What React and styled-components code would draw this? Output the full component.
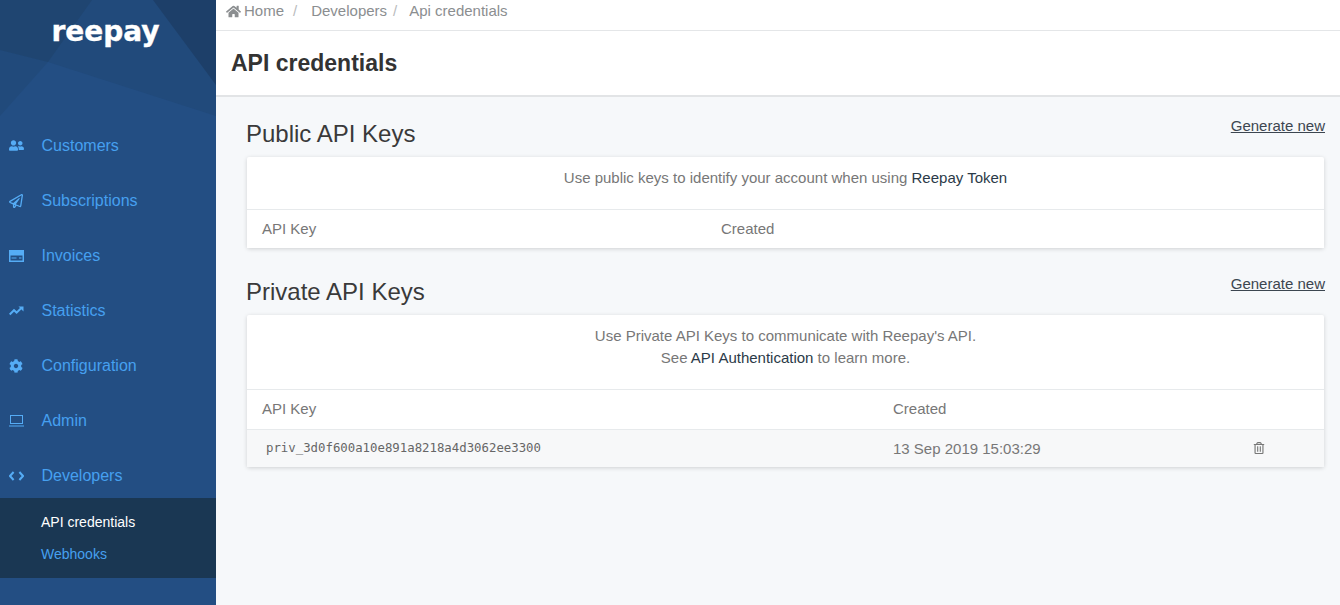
import React from "react";
import styled, { createGlobalStyle } from "styled-components";
import { FaHome, FaRegPaperPlane, FaCog, FaUserFriends, FaRegTrashAlt } from "react-icons/fa";

const GlobalStyle = createGlobalStyle`
  html, body { margin: 0; padding: 0; height: 100%; }
  body { font-family: "Liberation Sans", Arial, sans-serif; background: #f6f8fa; color: #777; overflow: hidden; }
`;

const Page = styled.div`
  display: flex;
  height: 605px;
  width: 1340px;
  overflow: hidden;
`;

const Sidebar = styled.aside`
  width: 216px;
  flex: none;
  background: #234e83;
  display: flex;
  flex-direction: column;
`;

const Brand = styled.div`
  position: relative;
  height: 118px;
  display: flex;
  justify-content: center;
  overflow: hidden;
`;

const BrandArt = styled.svg`
  position: absolute;
  inset: 0;
`;

const Logo = styled.span`
  position: relative;
  margin: 14px 5px 0 0;
  height: 36px;
  line-height: 36px;
  font-family: "DejaVu Sans", sans-serif;
  font-size: 28px;
  font-weight: 700;
  color: #fff;
  -webkit-text-stroke: 0.4px #fff;
`;

const NavList = styled.nav`
  display: flex;
  flex-direction: column;
`;

const NavItem = styled.a`
  height: 55px;
  display: flex;
  align-items: center;
  padding-left: 8px;
  font-size: 16px;
  color: #46a0f0;
`;

const NavIcon = styled.span`
  width: 16px;
  margin-right: 17.5px;
  display: flex;
  justify-content: center;
  color: #55acf5;
`;

const SubNav = styled.div`
  height: 80px;
  margin-top: -5px;
  background: #1a3753;
  display: flex;
  flex-direction: column;
  padding: 8px 0 0 41px;
  box-sizing: border-box;
`;

const SubItem = styled.a`
  height: 32px;
  line-height: 32px;
  font-size: 14px;
  color: ${(p) => (p.$active ? "#ffffff" : "#46a0f0")};
`;

const Main = styled.main`
  flex: 1;
  display: flex;
  flex-direction: column;
  min-width: 0;
`;

const Breadcrumb = styled.div`
  height: 29px;
  background: #fff;
  border-bottom: 1px solid #e4e6e8;
  display: flex;
  align-items: flex-start;
  padding: 1px 0 0 10px;
  font-size: 15px;
  line-height: 20px;
  color: #8b8e90;
`;

const Crumb = styled.span`
  display: flex;
  align-items: center;
  gap: 3px;
`;

const Slash = styled.span`
  color: #b9bbbd;
  margin: 0 ${(p) => p.$right}px 0 ${(p) => p.$left}px;
`;

const TitleBar = styled.header`
  height: 64px;
  background: #fff;
  border-bottom: 2px solid #e2e4e6;
  display: flex;
  align-items: center;
  padding-left: 15px;
`;

const Title = styled.h1`
  margin: 0;
  font-size: 23px;
  font-weight: 700;
  color: #333;
`;

const Content = styled.div`
  flex: 1;
  padding: 20px 15px 0 30px;
`;

const Section = styled.section`
  margin-bottom: 27px;
`;

const SectionHead = styled.div`
  display: flex;
  justify-content: space-between;
  height: 40px;
`;

const SectionTitle = styled.h2`
  margin: 0;
  font-size: 24px;
  font-weight: 400;
  line-height: 34px;
  color: #3a3a3a;
`;

const GenerateLink = styled.a`
  margin-top: -1px;
  font-size: 15px;
  line-height: 20px;
  height: 20px;
  color: #3c4650;
  text-decoration: underline;
`;

const Card = styled.div`
  margin-left: 1px;
  margin-right: 1px;
  background: #fff;
  border-radius: 2px;
  box-shadow: 0 1px 4px rgba(0, 0, 0, 0.16);
`;

const Note = styled.p`
  margin: 0;
  height: ${(p) => p.$height}px;
  padding-top: ${(p) => p.$top}px;
  box-sizing: border-box;
  text-align: center;
  font-size: 15px;
  line-height: 22px;
  color: #777;
  border-bottom: 1px solid #e7eaec;
`;

const Strong = styled.span`
  color: #2b3a48;
`;

const Row = styled.div`
  display: grid;
  grid-template-columns: ${(p) => p.$cols};
  align-items: center;
  box-sizing: border-box;
  height: ${(p) => p.$height}px;
  padding: 0 0 ${(p) => p.$pad}px 15px;
  font-size: 15px;
  color: #777;
  background: ${(p) => (p.$muted ? "#f7f8f9" : "#fff")};
  border-top: ${(p) => (p.$muted ? "1px solid #e7eaec" : "none")};
`;

const Mono = styled.span`
  font-family: "DejaVu Sans Mono", "Liberation Mono", monospace;
  font-size: 12.35px;
  padding-left: 4px;
  color: #666;
`;

const TrashCell = styled.span`
  display: flex;
  color: #777;
`;

const CardIcon = () => (
  <svg width="15" height="12" viewBox="0 0 15 12" fill="currentColor">
    <path d="M0 0h15v12H0z M1.5 5.5v5h12v-5z" fillRule="evenodd" />
    <path d="M2.5 7.5h5v1h-5z M10 7.5h2.5v1H10z" />
  </svg>
);

const TrendIcon = () => (
  <svg width="15" height="10" viewBox="0 0 15 10" fill="none" stroke="currentColor">
    <path d="M0.7 8.5 L5 4.2 L7.6 6.6 L12.6 1.8" strokeWidth="2" />
    <path d="M9.5 0.5 H14.5 V5.5 Z" fill="currentColor" stroke="none" />
  </svg>
);

const LaptopIcon = () => (
  <svg width="15" height="12" viewBox="0 0 15 12" fill="none" stroke="currentColor" strokeWidth="1">
    <rect x="1.5" y="0.5" width="12" height="8" />
    <path d="M0 11 H15" />
  </svg>
);

const CodeIcon = () => (
  <svg width="15" height="10" viewBox="0 0 15 10" fill="none" stroke="currentColor" strokeWidth="2">
    <path d="M4.6 1 L1 5 L4.6 9" />
    <path d="M10.4 1 L14 5 L10.4 9" />
  </svg>
);

const nav = [
  ["Customers", <FaUserFriends size={15} />],
  ["Subscriptions", <FaRegPaperPlane size={14} />],
  ["Invoices", <CardIcon />],
  ["Statistics", <TrendIcon />],
  ["Configuration", <FaCog size={14} />],
  ["Admin", <LaptopIcon />],
  ["Developers", <CodeIcon />],
];

export default function App() {
  return (
    <Page>
      <GlobalStyle />
      <Sidebar>
        <Brand>
          <BrandArt width="216" height="118" viewBox="0 0 216 118">
            <rect width="216" height="118" fill="#214a7b" />
            <polygon points="0,0 92,0 48,62 0,50" fill="#1f4571" />
            <polygon points="153,0 216,0 216,85" fill="#1d3f69" />
            <polygon points="48,62 216,116 216,118 0,118 0,116" fill="#234e83" />
          </BrandArt>
          <Logo>reepay</Logo>
        </Brand>
        <NavList>
          {nav.map(([label, icon]) => (
            <NavItem key={label}>
              <NavIcon>{icon}</NavIcon>
              {label}
            </NavItem>
          ))}
        </NavList>
        <SubNav>
          <SubItem $active>API credentials</SubItem>
          <SubItem>Webhooks</SubItem>
        </SubNav>
      </Sidebar>
      <Main>
        <Breadcrumb>
          <Crumb><FaHome size={15} /> Home</Crumb>
          <Slash $left={9} $right={14}>/</Slash>
          <Crumb>Developers</Crumb>
          <Slash $left={6} $right={12}>/</Slash>
          <Crumb>Api credentials</Crumb>
        </Breadcrumb>
        <TitleBar>
          <Title>API credentials</Title>
        </TitleBar>
        <Content>
          <Section>
            <SectionHead>
              <SectionTitle>Public API Keys</SectionTitle>
              <GenerateLink>Generate new</GenerateLink>
            </SectionHead>
            <Card>
              <Note $height={53} $top={10}>
                Use public keys to identify your account when using <Strong>Reepay Token</Strong>
              </Note>
              <Row $cols="459px 1fr" $height={38} $pad={1}>
                <span>API Key</span>
                <span>Created</span>
              </Row>
            </Card>
          </Section>
          <Section>
            <SectionHead>
              <SectionTitle>Private API Keys</SectionTitle>
              <GenerateLink>Generate new</GenerateLink>
            </SectionHead>
            <Card>
              <Note $height={75} $top={10}>
                Use Private API Keys to communicate with Reepay's API.
                <br />
                See <Strong>API Authentication</Strong> to learn more.
              </Note>
              <Row $cols="631px 360px 1fr" $height={39} $pad={3}>
                <span>API Key</span>
                <span>Created</span>
              </Row>
              <Row $cols="631px 360px 1fr" $height={38} $pad={1} $muted>
                <Mono>priv_3d0f600a10e891a8218a4d3062ee3300</Mono>
                <span>13 Sep 2019 15:03:29</span>
                <TrashCell><FaRegTrashAlt size={12} /></TrashCell>
              </Row>
            </Card>
          </Section>
        </Content>
      </Main>
    </Page>
  );
}
